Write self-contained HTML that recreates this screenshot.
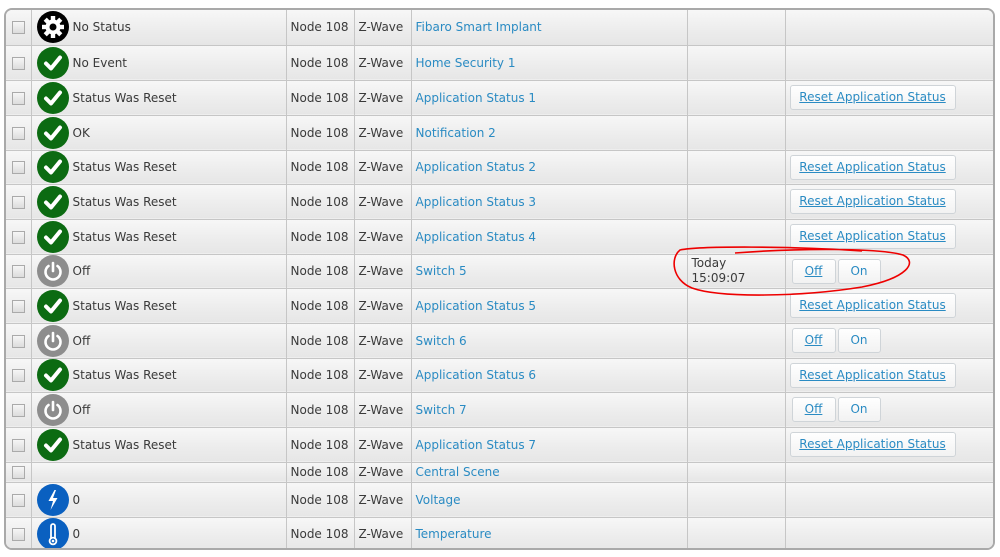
<!DOCTYPE html>
<html><head><meta charset="utf-8"><style>
*{margin:0;padding:0;box-sizing:border-box}
body{width:1000px;height:557px;background:#fff;position:relative;overflow:hidden;font-family:"DejaVu Sans","Liberation Sans",sans-serif;font-size:12px;color:#3a3a3a}
.wrap{position:absolute;left:4px;top:8px;width:991px;height:542px;border:2px solid #a9a9a9;border-radius:8px;overflow:hidden}
table{border-collapse:collapse;table-layout:fixed;width:100%}
td{border-right:1px solid #c6c6c6;border-bottom:1px solid #c6c6c6;background:linear-gradient(#f7f7f7,#ececec 60%,#e6e6e6);padding:0 0 0 4px;white-space:nowrap;vertical-align:middle;overflow:hidden}
td:last-child{border-right:none}
tr:last-child td{border-bottom:none}
.cb{display:inline-block;width:13px;height:13px;border:1px solid #aaa;background:linear-gradient(#f6f6f6,#dcdcdc);margin-left:2px;vertical-align:middle}
.st{display:flex;align-items:center}
.ic{width:32px;height:32px;border-radius:50%;display:inline-block;margin:0 4px 0 1px;flex:none}
.g{background:#0c6b12}.k{background:#000}.p{background:#8d8d8d}.b{background:#0a60c0}
a{color:#2a8bc3;text-decoration:none}
.btn{display:inline-block;height:25px;line-height:23px;border:1px solid #cfd4d8;border-radius:3px;background:linear-gradient(#fff,#f2f2f2);color:#2a8bc3;text-decoration:underline;text-align:center;font-size:12px;vertical-align:middle}
.r{width:166px}.o{width:44px;margin-left:2px}.n{width:43px;margin-left:2px;text-decoration:none}
</style></head><body>
<div class="wrap"><table>
<colgroup><col style="width:25px"><col style="width:255px"><col style="width:68px"><col style="width:57px"><col style="width:276px"><col style="width:98px"><col></colgroup>
<tbody>
<tr style="height:35px"><td><span class="cb"></span></td><td><div class="st"><svg class="ic k" viewBox="0 0 32 32"><g fill="#fff" transform="translate(16 16)"><circle r="7.5"/><g id="t"><rect x="-2.2" y="-11" width="4.4" height="5"/></g><use href="#t" transform="rotate(45)"/><use href="#t" transform="rotate(90)"/><use href="#t" transform="rotate(135)"/><use href="#t" transform="rotate(180)"/><use href="#t" transform="rotate(225)"/><use href="#t" transform="rotate(270)"/><use href="#t" transform="rotate(315)"/></g><circle cx="16" cy="16" r="3.5" fill="#000"/></svg>No Status</div></td><td>Node 108</td><td>Z-Wave</td><td><a>Fibaro Smart Implant</a></td><td></td><td></td></tr>
<tr style="height:35px"><td><span class="cb"></span></td><td><div class="st"><svg class="ic g" viewBox="0 0 32 32"><path d="M9 16.5l5 5 9-11" stroke="#fff" stroke-width="4" fill="none" stroke-linecap="round" stroke-linejoin="round"/></svg>No Event</div></td><td>Node 108</td><td>Z-Wave</td><td><a>Home Security 1</a></td><td></td><td></td></tr>
<tr style="height:35px"><td><span class="cb"></span></td><td><div class="st"><svg class="ic g" viewBox="0 0 32 32"><path d="M9 16.5l5 5 9-11" stroke="#fff" stroke-width="4" fill="none" stroke-linecap="round" stroke-linejoin="round"/></svg>Status Was Reset</div></td><td>Node 108</td><td>Z-Wave</td><td><a>Application Status 1</a></td><td></td><td><span class="btn r">Reset Application Status</span></td></tr>
<tr style="height:35px"><td><span class="cb"></span></td><td><div class="st"><svg class="ic g" viewBox="0 0 32 32"><path d="M9 16.5l5 5 9-11" stroke="#fff" stroke-width="4" fill="none" stroke-linecap="round" stroke-linejoin="round"/></svg>OK</div></td><td>Node 108</td><td>Z-Wave</td><td><a>Notification 2</a></td><td></td><td></td></tr>
<tr style="height:34px"><td><span class="cb"></span></td><td><div class="st"><svg class="ic g" viewBox="0 0 32 32"><path d="M9 16.5l5 5 9-11" stroke="#fff" stroke-width="4" fill="none" stroke-linecap="round" stroke-linejoin="round"/></svg>Status Was Reset</div></td><td>Node 108</td><td>Z-Wave</td><td><a>Application Status 2</a></td><td></td><td><span class="btn r">Reset Application Status</span></td></tr>
<tr style="height:35px"><td><span class="cb"></span></td><td><div class="st"><svg class="ic g" viewBox="0 0 32 32"><path d="M9 16.5l5 5 9-11" stroke="#fff" stroke-width="4" fill="none" stroke-linecap="round" stroke-linejoin="round"/></svg>Status Was Reset</div></td><td>Node 108</td><td>Z-Wave</td><td><a>Application Status 3</a></td><td></td><td><span class="btn r">Reset Application Status</span></td></tr>
<tr style="height:35px"><td><span class="cb"></span></td><td><div class="st"><svg class="ic g" viewBox="0 0 32 32"><path d="M9 16.5l5 5 9-11" stroke="#fff" stroke-width="4" fill="none" stroke-linecap="round" stroke-linejoin="round"/></svg>Status Was Reset</div></td><td>Node 108</td><td>Z-Wave</td><td><a>Application Status 4</a></td><td></td><td><span class="btn r">Reset Application Status</span></td></tr>
<tr style="height:34px"><td><span class="cb"></span></td><td><div class="st"><svg class="ic p" viewBox="0 0 32 32"><path d="M11.5 11a7.5 7.5 0 1 0 9 0" stroke="#fff" stroke-width="2.6" fill="none" stroke-linecap="round"/><path d="M16 8v8" stroke="#fff" stroke-width="2.6" stroke-linecap="round"/></svg>Off</div></td><td>Node 108</td><td>Z-Wave</td><td><a>Switch 5</a></td><td style="white-space:normal;line-height:15px">Today<br>15:09:07</td><td><span class="btn o">Off</span><span class="btn n">On</span></td></tr>
<tr style="height:35px"><td><span class="cb"></span></td><td><div class="st"><svg class="ic g" viewBox="0 0 32 32"><path d="M9 16.5l5 5 9-11" stroke="#fff" stroke-width="4" fill="none" stroke-linecap="round" stroke-linejoin="round"/></svg>Status Was Reset</div></td><td>Node 108</td><td>Z-Wave</td><td><a>Application Status 5</a></td><td></td><td><span class="btn r">Reset Application Status</span></td></tr>
<tr style="height:35px"><td><span class="cb"></span></td><td><div class="st"><svg class="ic p" viewBox="0 0 32 32"><path d="M11.5 11a7.5 7.5 0 1 0 9 0" stroke="#fff" stroke-width="2.6" fill="none" stroke-linecap="round"/><path d="M16 8v8" stroke="#fff" stroke-width="2.6" stroke-linecap="round"/></svg>Off</div></td><td>Node 108</td><td>Z-Wave</td><td><a>Switch 6</a></td><td></td><td><span class="btn o">Off</span><span class="btn n">On</span></td></tr>
<tr style="height:34px"><td><span class="cb"></span></td><td><div class="st"><svg class="ic g" viewBox="0 0 32 32"><path d="M9 16.5l5 5 9-11" stroke="#fff" stroke-width="4" fill="none" stroke-linecap="round" stroke-linejoin="round"/></svg>Status Was Reset</div></td><td>Node 108</td><td>Z-Wave</td><td><a>Application Status 6</a></td><td></td><td><span class="btn r">Reset Application Status</span></td></tr>
<tr style="height:35px"><td><span class="cb"></span></td><td><div class="st"><svg class="ic p" viewBox="0 0 32 32"><path d="M11.5 11a7.5 7.5 0 1 0 9 0" stroke="#fff" stroke-width="2.6" fill="none" stroke-linecap="round"/><path d="M16 8v8" stroke="#fff" stroke-width="2.6" stroke-linecap="round"/></svg>Off</div></td><td>Node 108</td><td>Z-Wave</td><td><a>Switch 7</a></td><td></td><td><span class="btn o">Off</span><span class="btn n">On</span></td></tr>
<tr style="height:35px"><td><span class="cb"></span></td><td><div class="st"><svg class="ic g" viewBox="0 0 32 32"><path d="M9 16.5l5 5 9-11" stroke="#fff" stroke-width="4" fill="none" stroke-linecap="round" stroke-linejoin="round"/></svg>Status Was Reset</div></td><td>Node 108</td><td>Z-Wave</td><td><a>Application Status 7</a></td><td></td><td><span class="btn r">Reset Application Status</span></td></tr>
<tr style="height:20px"><td><span class="cb"></span></td><td></td><td>Node 108</td><td>Z-Wave</td><td><a>Central Scene</a></td><td></td><td></td></tr>
<tr style="height:35px"><td><span class="cb"></span></td><td><div class="st"><svg class="ic b" viewBox="0 0 32 32"><path d="M17.5 6l-6 11h4.5l-2.5 9 7-12h-4.5l3-8z" fill="#fff"/></svg>0</div></td><td>Node 108</td><td>Z-Wave</td><td><a>Voltage</a></td><td></td><td></td></tr>
<tr style="height:34px"><td><span class="cb"></span></td><td><div class="st"><svg class="ic b" viewBox="0 0 32 32"><path d="M14 21V8a2 2 0 0 1 4 0v13" stroke="#fff" stroke-width="1.8" fill="none"/><circle cx="16" cy="23" r="3.4" stroke="#fff" stroke-width="1.8" fill="none"/><circle cx="16" cy="23" r="1.3" fill="#fff"/></svg>0</div></td><td>Node 108</td><td>Z-Wave</td><td><a>Temperature</a></td><td></td><td></td></tr>
</tbody></table></div>
<svg style="position:absolute;left:0;top:0" width="1000" height="557"><path d="M735 253C800 248 880 248 903 255C918 262 908 278 862 287C800 297 720 298 692 288C672 280 670 258 680 250C700 246 790 246 862 251" stroke="#e00" stroke-width="1.6" fill="none"/></svg>
</body></html>
